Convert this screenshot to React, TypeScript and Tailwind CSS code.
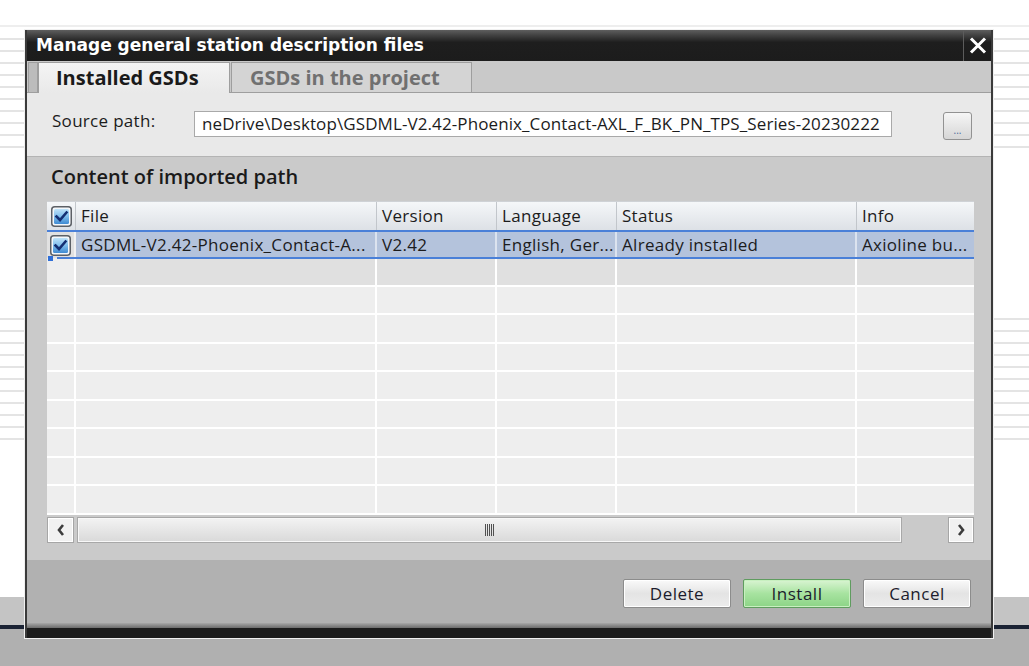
import React from "react";

function Stripes({ className }: { className: string }) {
  const g1 = Array.from({ length: 10 });
  const g2 = Array.from({ length: 11 });
  return (
    <div className={className}>
      <div className="pt-[11px] flex flex-col gap-[10px]">
        {g1.map((_, i) => (
          <div key={i} className="h-[2px] bg-[#e4e4e4]" />
        ))}
      </div>
      <div className="mt-[170px] flex flex-col gap-[10px]">
        {g2.map((_, i) => (
          <div key={i} className="h-[2px] bg-[#e4e4e4]" />
        ))}
      </div>
    </div>
  );
}

function CheckBox() {
  return (
    <svg width="21" height="21" viewBox="0 0 21 21">
      <defs>
        <linearGradient id="cbg" x1="0" y1="0" x2="0" y2="1">
          <stop offset="0" stopColor="#bfe3fa" />
          <stop offset="0.5" stopColor="#7fbdec" />
          <stop offset="1" stopColor="#3f8ad2" />
        </linearGradient>
      </defs>
      <rect x="0.75" y="0.75" width="19.5" height="19.5" rx="3" fill="#f4f7fa" stroke="#5c6066" strokeWidth="1.5" />
      <rect x="3" y="3" width="15" height="15" rx="1.5" fill="url(#cbg)" />
      <path d="M5.5 10.5 L9 14 L15.5 6.5" fill="none" stroke="#142f73" strokeWidth="2.6" strokeLinecap="square" />
    </svg>
  );
}

function Chevron({ dir }: { dir: "l" | "r" }) {
  return (
    <svg width="10" height="14" viewBox="0 0 10 14">
      {dir === "l" ? (
        <path d="M7 2 L3 7 L7 12" fill="none" stroke="#3c3c3c" strokeWidth="2.6" />
      ) : (
        <path d="M3 2 L7 7 L3 12" fill="none" stroke="#3c3c3c" strokeWidth="2.6" />
      )}
    </svg>
  );
}

const cols = [
  { w: "w-[301px]", h: "File", v: "GSDML-V2.42-Phoenix_Contact-A..." },
  { w: "w-[120px]", h: "Version", v: "V2.42" },
  { w: "w-[120px]", h: "Language", v: "English, Ger..." },
  { w: "w-[240px]", h: "Status", v: "Already installed" },
  { w: "flex-1", h: "Info", v: "Axioline bu..." },
];

function Table() {
  const rows = Array.from({ length: 9 });
  return (
    <div className="ml-[20px] mr-[17px] mt-[12px] flex flex-col text-[17px] tracking-[0.3px] text-[#1c1c1c]">
      {/* header */}
      <div className="h-[29px] flex bg-gradient-to-b from-[#f5f7f9] to-[#dde1e6] border-t border-[#cfd2d6]">
        <div className="w-[29px] flex items-center justify-center border-r border-[#c2c6cb]">
          <CheckBox />
        </div>
        {cols.map((c, i) => (
          <div
            key={i}
            className={`${c.w} pl-[5px] flex items-center whitespace-nowrap overflow-hidden ${i < 4 ? "border-r border-[#c2c6cb]" : ""}`}
          >
            {c.h}
          </div>
        ))}
      </div>
      {/* selected row */}
      <div className="relative h-[28px] flex border-t-2 border-[#4a80d8]">
        <div className="w-[29px] flex items-center justify-center bg-[#e1e1e1] border-r-2 border-[#f2f2f2]">
          <CheckBox />
        </div>
        {cols.map((c, i) => (
          <div
            key={i}
            className={`${c.w} pl-[5px] flex items-center whitespace-nowrap overflow-hidden bg-[#b4c3dc] ${i < 4 ? "border-r-2 border-[#dce3ef]" : ""}`}
          >
            {c.v}
          </div>
        ))}
        <div className="absolute left-[10px] right-0 bottom-[-1px] h-[2px] bg-[#4a80d8]" />
        <div className="absolute left-[1px] bottom-[-3px] w-[5px] h-[5px] bg-[#2f6fd8]" />
      </div>
      {/* empty rows */}
      <div className="h-[257px] grid grid-rows-9">
        {rows.map((_, r) => (
          <div key={r} className="flex border-b-2 border-white">
            <div className="w-[29px] bg-[#eeeeee] border-r-2 border-white" />
            {cols.map((c, i) => (
              <div
                key={i}
                className={`${c.w} ${r === 0 ? "bg-[#e0e0e0]" : "bg-[#eeeeee]"} ${i < 4 ? "border-r-2 border-white" : ""}`}
              />
            ))}
          </div>
        ))}
      </div>
      {/* scrollbar */}
      <div className="mt-[2px] h-[26px] flex">
        <div className="w-[27px] flex items-center justify-center bg-[#f1f1f1] border border-[#a6a6a6] shadow-[inset_0_0_0_1px_#ffffff]">
          <Chevron dir="l" />
        </div>
        <div className="ml-[3px] w-[825px] flex items-center justify-center border border-[#a8a8a8] shadow-[inset_0_0_0_1px_#f8f8f8] bg-gradient-to-b from-[#f3f3f3] to-[#d9d9d9]">
          <div className="flex gap-[1px]">
            {[0, 1, 2, 3, 4].map((i) => (
              <div key={i} className="w-[1px] h-[12px] bg-[#505050]" />
            ))}
          </div>
        </div>
        <div className="flex-1" />
        <div className="w-[26px] flex items-center justify-center bg-[#f1f1f1] border border-[#a6a6a6] shadow-[inset_0_0_0_1px_#ffffff]">
          <Chevron dir="r" />
        </div>
      </div>
    </div>
  );
}

function Btn({ label, green }: { label: string; green?: boolean }) {
  return (
    <div
      className={`w-[108px] h-[29px] flex items-center justify-center rounded-[2px] text-[17px] tracking-[0.5px] text-[#1c1c2c] ${
        green
          ? "border border-[#5f9c5f] bg-gradient-to-b from-[#d9f4d2] via-[#a7e3a0] to-[#8cd486] shadow-[inset_0_0_0_1px_#c8f0c0]"
          : "border border-[#8c8c8c] bg-gradient-to-b from-[#fafafa] via-[#e4e4e4] to-[#ececec] shadow-[inset_0_0_0_1px_#ffffff]"
      }`}
    >
      {label}
    </div>
  );
}

function Dialog() {
  return (
    <div className="absolute left-[24px] top-[29px] w-[970px] h-[610px] border border-[#f0f0f0] flex flex-col">
      <div className="flex-1 flex flex-col border-x-2 border-[#3a3a3a]">
        {/* title bar */}
        <div className="h-[31px] flex bg-gradient-to-b from-[#5e5e5e] via-[#1e1e1e] via-40% to-[#1c1c1c]">
          <div className="flex-1 pl-[9px] pt-[1px] flex items-center text-white font-bold text-[17px] font-['DejaVu_Sans',sans-serif] whitespace-nowrap">
            Manage general station description files
          </div>
          <div className="w-[28px] border-l border-[#5c5c5c] flex items-center justify-center">
            <svg width="18" height="17" viewBox="0 0 18 17">
              <path d="M2 1.5 L16 15.5 M16 1.5 L2 15.5" stroke="#ffffff" strokeWidth="3" />
            </svg>
          </div>
        </div>
        {/* tabs */}
        <div className="h-[32px] flex items-end bg-[#c9c9c9] border-b border-[#9e9e9e]">
          <div className="ml-[1px] w-[10px] h-[30px] bg-[#bcbcbc] border border-b-0 border-[#9e9e9e]" />
          <div className="relative -mb-px w-[192px] h-[31px] pl-[17px] flex items-center bg-gradient-to-b from-[#f4f4f4] to-[#e9e9e9] border border-b-0 border-[#9e9e9e] font-bold text-[20px] text-[#1a1a1a] whitespace-nowrap">
            Installed GSDs
          </div>
          <div className="ml-[1px] w-[241px] h-[30px] pl-[18px] flex items-center bg-[#d4d4d4] border border-b-0 border-[#9e9e9e] font-bold text-[20px] text-[#707070] whitespace-nowrap">
            GSDs in the project
          </div>
        </div>
        {/* source path */}
        <div className="h-[64px] flex items-start bg-[#e9e9e9] border-b border-[#b4b4b4] text-[17px] text-[#1c1c1c]">
          <div className="ml-[25px] mt-[18px] leading-[20px] w-[142px] tracking-[0.3px] whitespace-nowrap">Source path:</div>
          <div className="mt-[18px] w-[698px] h-[26px] pl-[7px] flex items-center bg-white border border-[#a9a9a9] tracking-[0.1px] whitespace-nowrap overflow-hidden">
            neDrive\Desktop\GSDML-V2.42-Phoenix_Contact-AXL_F_BK_PN_TPS_Series-20230222
          </div>
          <div className="ml-[51px] mt-[19px] w-[29px] h-[28px] rounded-[3px] border border-[#929292] bg-gradient-to-b from-[#f6f6f6] to-[#d6d6d6] flex items-end justify-center pb-[4px]">
            <span className="text-[10px] leading-[10px] text-[#4c6a9c]">...</span>
          </div>
        </div>
        {/* content */}
        <div className="h-[403px] bg-[#cacaca] flex flex-col">
          <div className="ml-[24px] mt-[8px] h-[24px] leading-[24px] text-[20px] font-semibold text-[#1a1a1a] whitespace-nowrap">
            Content of imported path
          </div>
          <Table />
        </div>
        {/* buttons */}
        <div className="h-[63px] bg-[#b1b1b1] flex justify-end items-start pt-[19px] pr-[20px] gap-[12px]">
          <Btn label="Delete" />
          <Btn label="Install" green />
          <Btn label="Cancel" />
        </div>
        <div className="h-[5px] bg-gradient-to-b from-[#a8a8a8] to-[#6c6c6c]" />
        <div className="h-[10px] bg-[#1c1c1c]" />
      </div>
    </div>
  );
}

export default function App() {
  return (
    <div className="relative w-[1029px] h-[666px] overflow-hidden bg-white font-['Open_Sans',sans-serif]">
      <div className="flex flex-col h-full">
        <div className="h-[25px]" />
        <div className="h-[2px] bg-[#eeeeee]" />
        <div className="flex-1 flex justify-between">
          <Stripes className="w-[24px]" />
          <Stripes className="w-[36px]" />
        </div>
        <div className="h-[28px] bg-[#c4c4c4]" />
        <div className="h-[4px] bg-[#1b2334]" />
        <div className="h-[37px] bg-[#b0b0b0]" />
      </div>
      <Dialog />
    </div>
  );
}
